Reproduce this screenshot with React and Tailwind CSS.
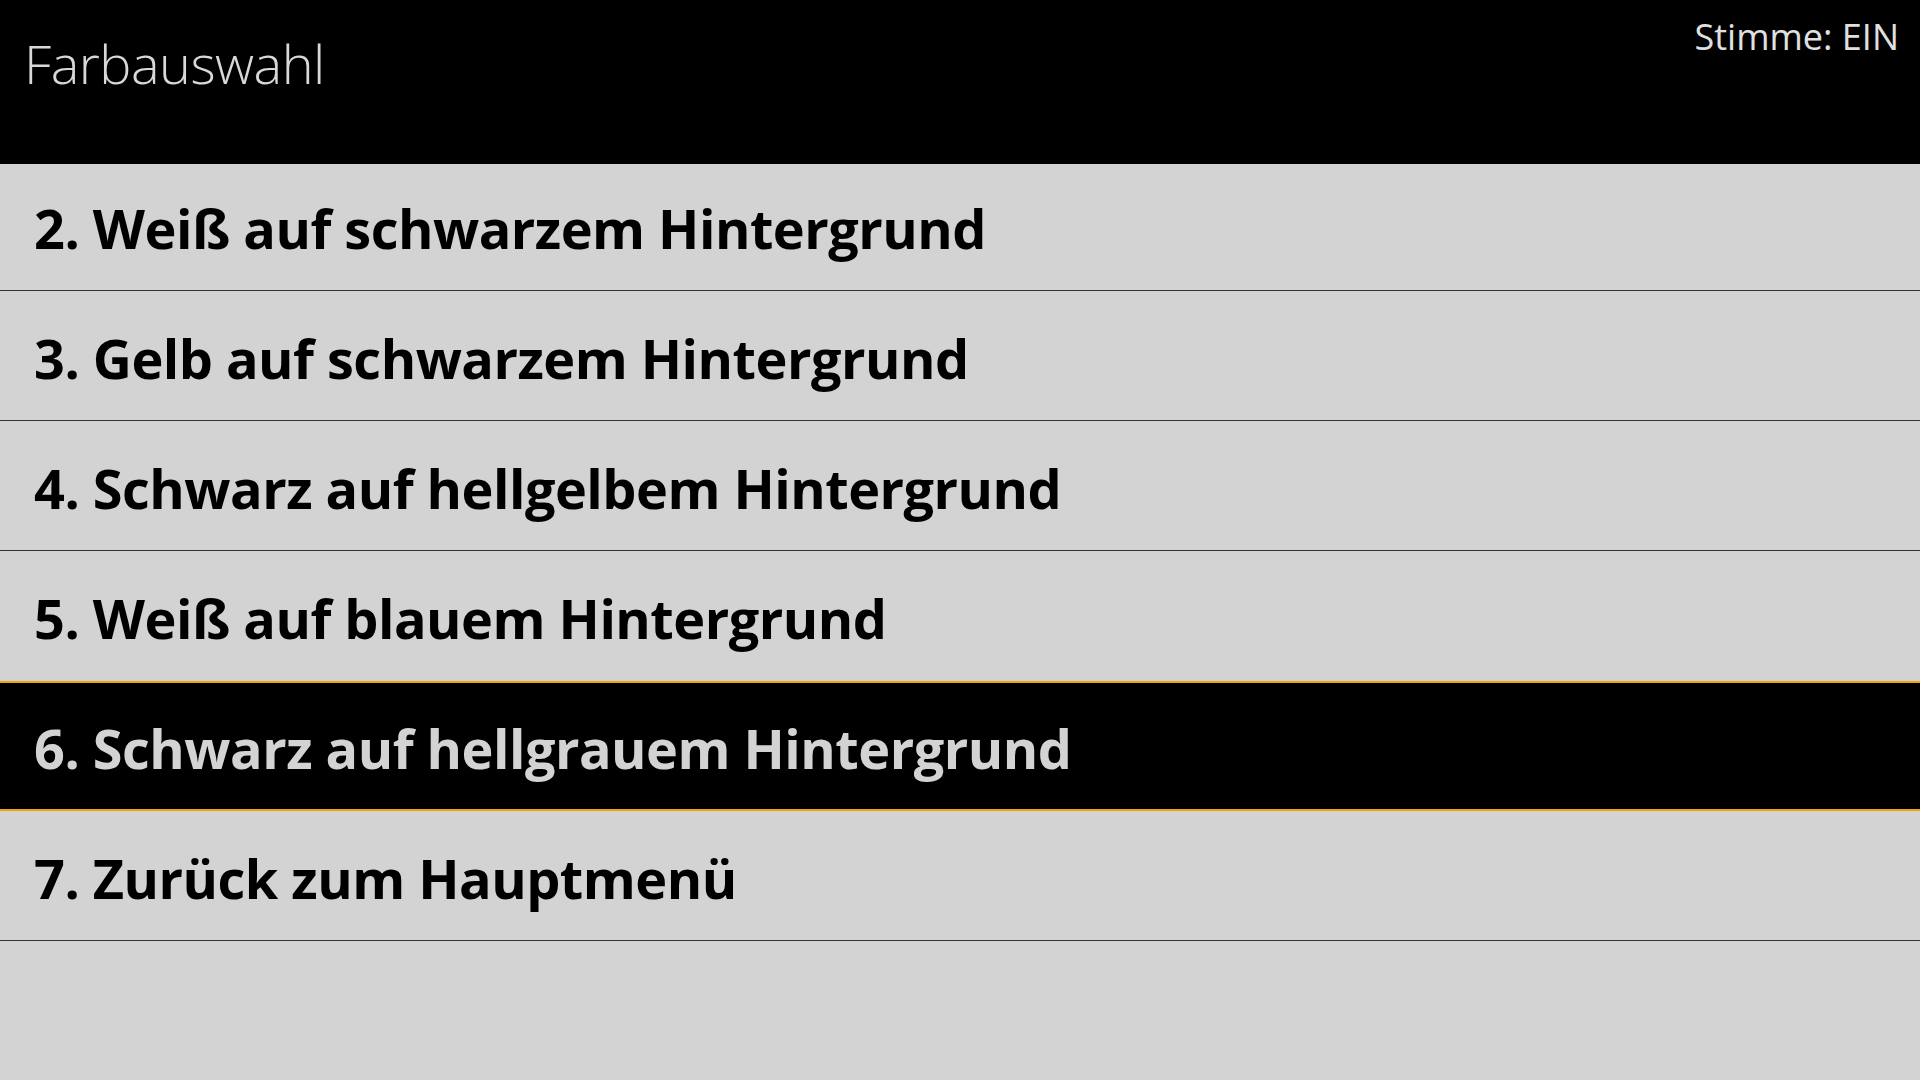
const items = [
  '2. Weiß auf schwarzem Hintergrund',
  '3. Gelb auf schwarzem Hintergrund',
  '4. Schwarz auf hellgelbem Hintergrund',
  '5. Weiß auf blauem Hintergrund',
  '6. Schwarz auf hellgrauem Hintergrund',
  '7. Zurück zum Hauptmenü',
]

export default function App() {
  const selected = 4
  return (
    <div className="w-[1920px] h-[1080px] flex flex-col bg-[#d3d3d3] overflow-hidden" style={{ fontFamily: '"Open Sans", "Noto Sans", sans-serif' }}>
      {/* Kopfzeile */}
      <div className="h-[164px] shrink-0 bg-black flex justify-between items-start">
        <h1 className="pl-[24px] pt-[36px] text-[54px] leading-none font-light text-[#d8d8d8] tracking-[-0.5px]">Farbauswahl</h1>
        <p className="pr-[21px] pt-[19px] text-[36px] leading-none text-[#e0e0e0]">Stimme: EIN</p>
      </div>

      {/* Liste, leicht gescrollt */}
      <div className="flex-1 overflow-hidden">
        <div className="-mt-[3px] flex flex-col">
          {items.map((label, i) => (
            <div
              key={label}
              className={
                i === selected
                  ? 'h-[130px] flex items-center pl-[34px] pt-[4px] bg-black text-[#d3d3d3] border-y-2 border-[#f0a30a]'
                  : i === selected - 1
                  ? 'h-[130px] flex items-center pl-[34px] pt-[4px] text-black'
                  : 'h-[130px] flex items-center pl-[34px] pt-[4px] text-black border-b border-[#333]'
              }
            >
              <span className="text-[54px] font-bold leading-none tracking-[-0.5px]">{label}</span>
            </div>
          ))}
        </div>
      </div>
    </div>
  )
}
